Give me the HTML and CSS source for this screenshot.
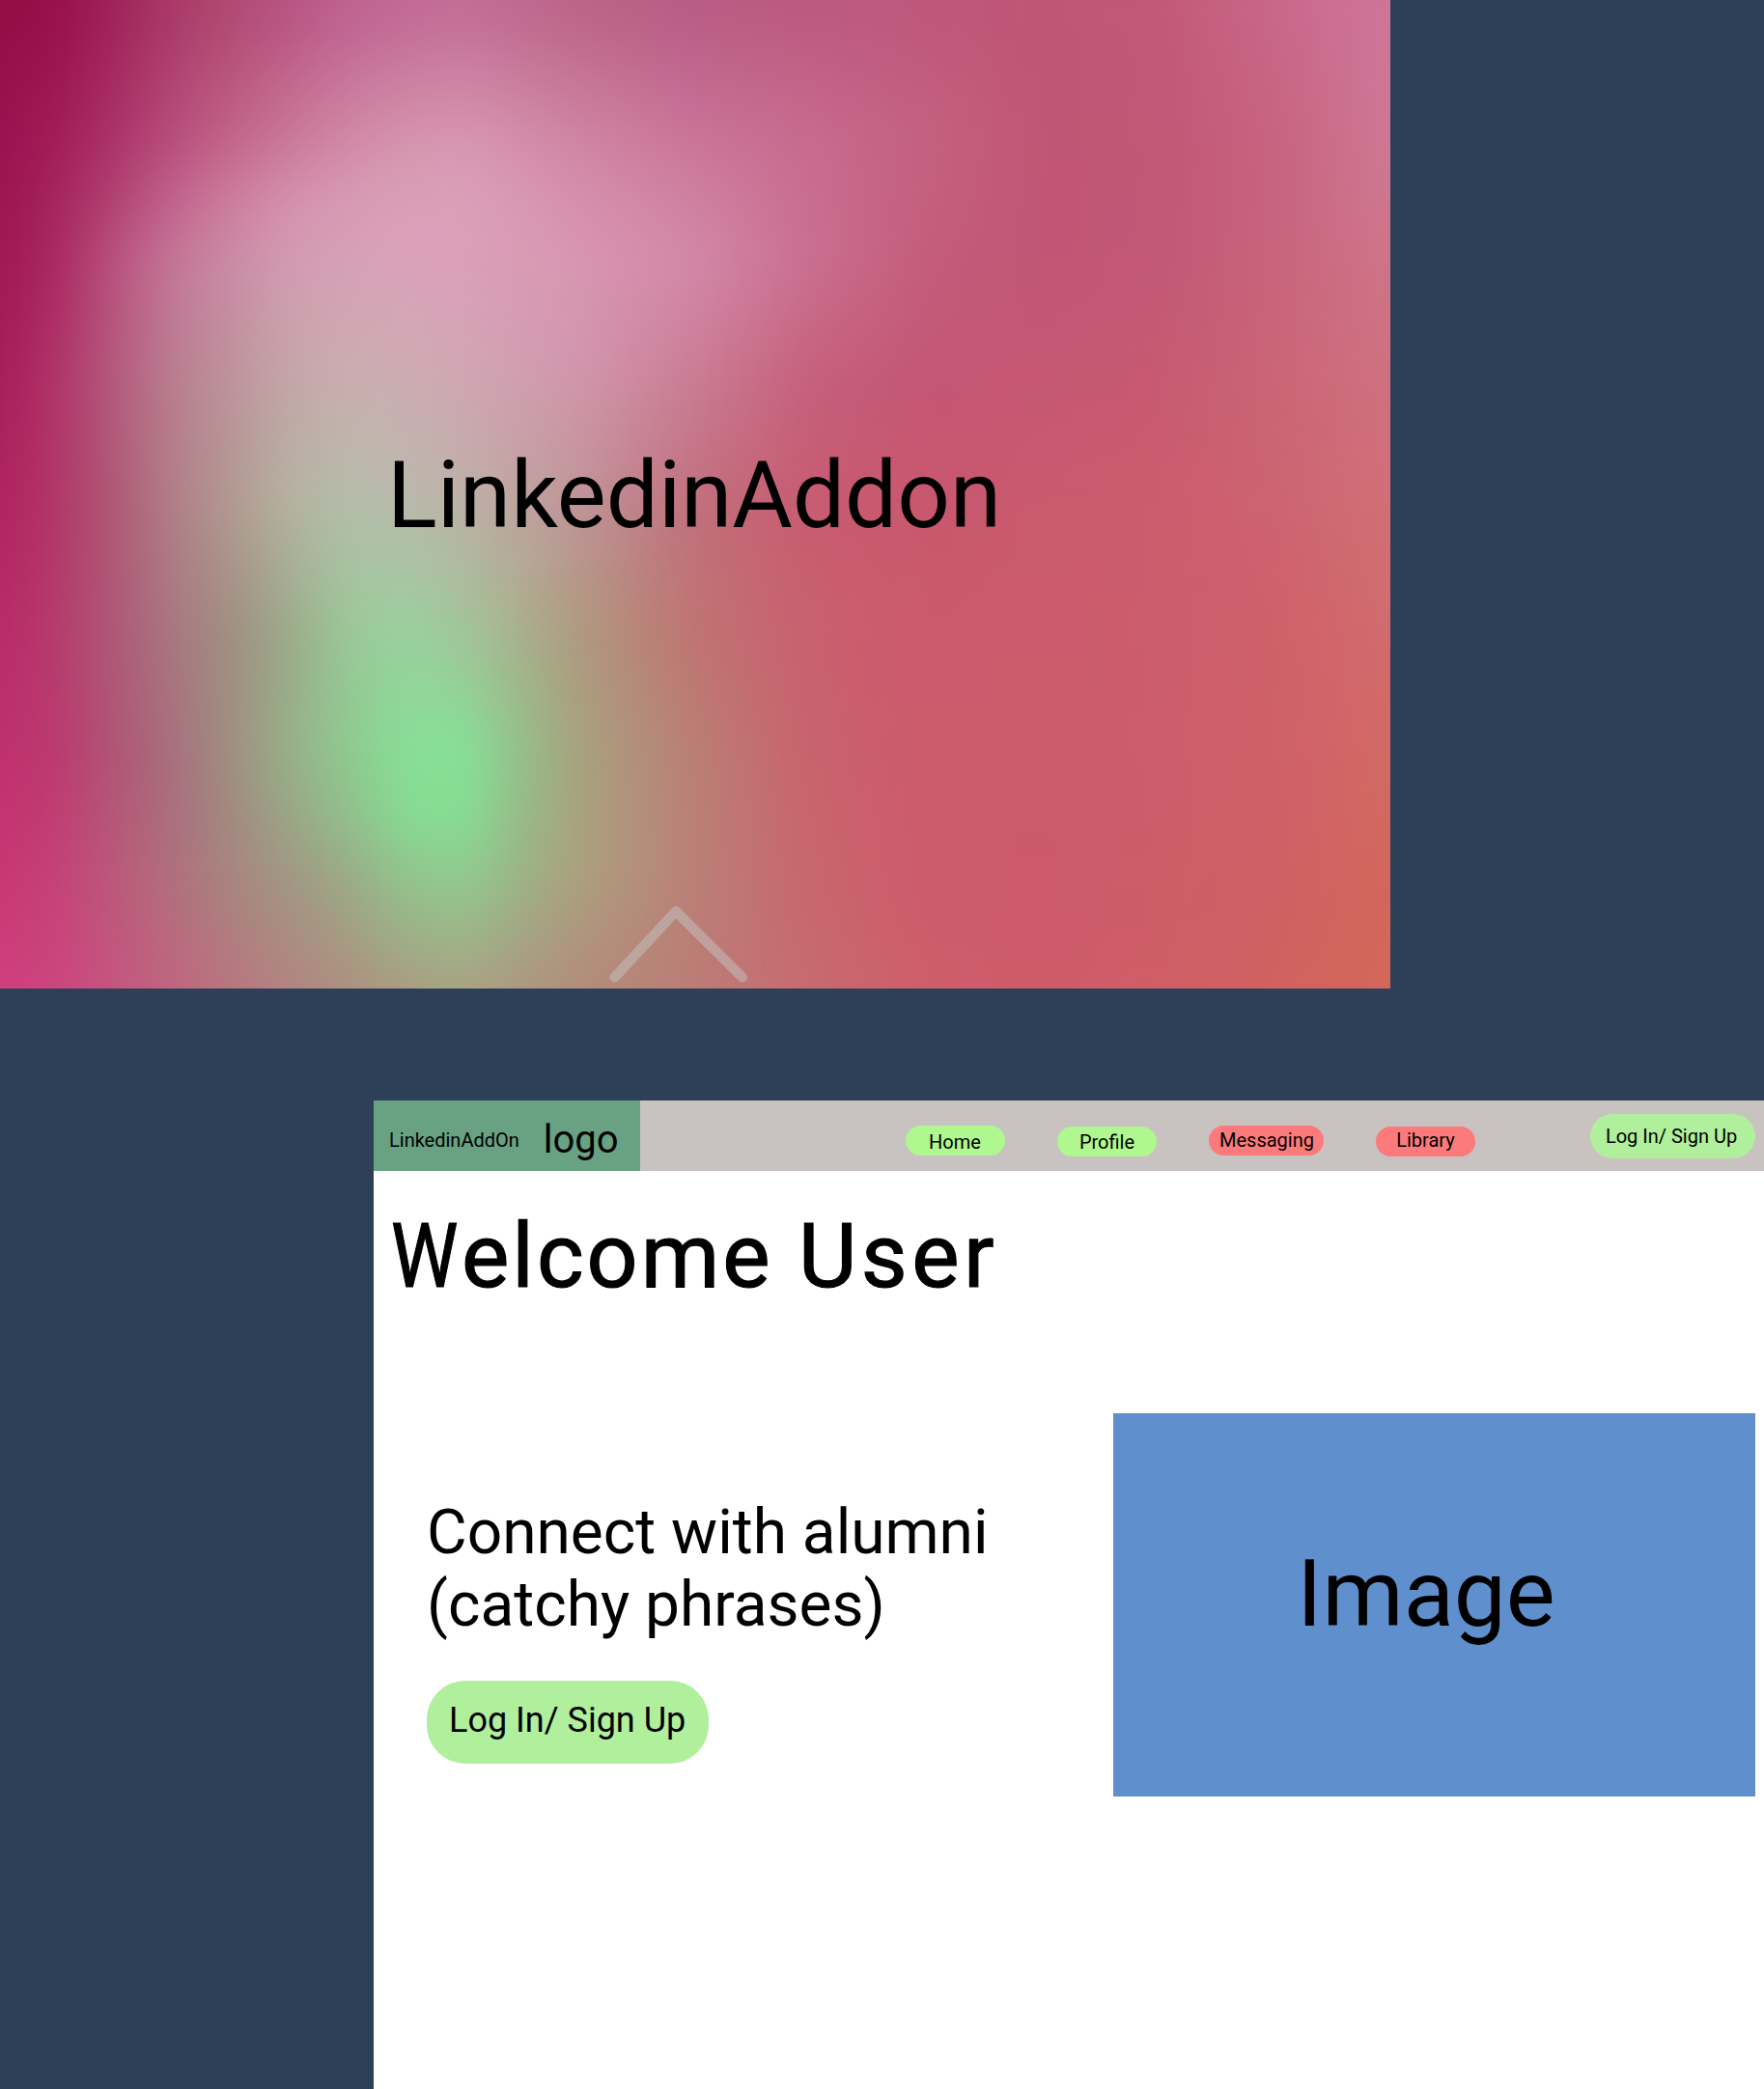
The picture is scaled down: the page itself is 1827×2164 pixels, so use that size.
FILE: index.html
```html
<!DOCTYPE html>
<html lang="en">
<head>
<meta charset="utf-8">
<title>LinkedinAddon</title>
<link rel="stylesheet" href="styles.css">
</head>
<body>
<section class="hero">
  <div class="mesh" aria-hidden="true">
    <div class="mesh-row row-0"></div>
    <div class="mesh-row row-128"></div>
    <div class="mesh-row row-192"></div>
    <div class="mesh-row row-256"></div>
    <div class="mesh-row row-384"></div>
    <div class="mesh-row row-512"></div>
    <div class="mesh-row row-640"></div>
    <div class="mesh-row row-768"></div>
    <div class="mesh-row row-832"></div>
    <div class="mesh-row row-896"></div>
    <div class="mesh-row row-1024"></div>
  </div>
  <h1 class="hero-title">LinkedinAddon</h1>
  <svg class="chevron" viewBox="0 0 144 80" width="144" height="80"><path d="M6.7 74.3 70 6 138.7 74.3"/></svg>
</section>
<main class="home">
  <header class="topbar">
    <div class="brand"><span class="brand-name">LinkedinAddOn</span><span class="brand-logo">logo</span></div>
    <nav class="nav">
      <a class="pill pill-home">Home</a>
      <a class="pill pill-profile">Profile</a>
      <a class="pill pill-messaging">Messaging</a>
      <a class="pill pill-library">Library</a>
    </nav>
    <a class="login">Log In/ Sign Up</a>
  </header>
  <h2 class="welcome"><span class="welcome-initial">W</span><span class="welcome-first">elcome</span><span class="welcome-second">User</span></h2>
  <div class="intro">
    <div class="pitch">
      <p class="tagline">Connect with alumni<br>(catchy phrases)</p>
      <a class="cta">Log In/ Sign Up</a>
    </div>
    <div class="picture"><span>Image</span></div>
  </div>
</main>
</body>
</html>
```

FILE: styles.css
```css
* { box-sizing: border-box; }
body {
  margin: 0;
  width: 1827px;
  height: 2164px;
  overflow: hidden;
  background: #2e4057;
  color: #000;
  font-family: Roboto, sans-serif;
}
h1, h2, p { margin: 0; font-weight: 400; }

/* Opening panel with a blended colour field */
.hero {
  position: relative;
  width: 1440px;
  height: 1024px;
  overflow: hidden;
  display: flex;
  justify-content: center;
  padding: 457px 2px 0 0;
}
.hero-title {
  position: relative;
  font-size: 96px;
  line-height: 112px;
  height: 112px;
}
/* Each row fades in over the one above; stops run left to right */
.mesh {
  position: absolute;
  inset: -46px -60px -60px;
  display: grid;
  filter: blur(20px);
}
.mesh-row {
  --span: 128px;
  grid-area: 1 / 1;
  background: linear-gradient(to right, var(--stops));
  -webkit-mask-image: linear-gradient(transparent var(--from), #000 calc(var(--from) + var(--span)));
  mask-image: linear-gradient(transparent var(--from), #000 calc(var(--from) + var(--span)));
}
.row-0 { --from: -200px; --stops: #950c44 60px, #98104a, #a0245a, #aa3a68, #b04a74, #b85582, #bf6290, #c26a94, #c36e96 540px, #bb6488 660px, #b95c85, #bc5a80, #be587b, #c05577, #c35879, #c9688a, #cf7699 1500px; }
.row-128 { --from: 60px; --stops: #9b1150 60px, #a31d58, #ab3468, #b74e7c, #c26489, #ca7798, #d088a6, #d493ad, #d797b2 540px, #cf84a5 660px, #ca7399, #c76b8d, #c46181, #c15574, #c25776, #c76380, #cf7896 1500px; }
.row-192 { --from: 188px; --span: 64px; --stops: #9d1350 60px, #a5265c, #b14373, #c2648d, #cd7e9f, #d591af, #d79bb4, #daa0b8, #dba0b9 540px, #d590ad 660px, #cf80a1, #c96d8f, #c45f7f, #c25575, #c25776, #c7647e, #cf7790 1500px; }
.row-256 { --from: 252px; --span: 64px; --stops: #a21652 60px, #aa2a62, #ba5480, #c5789a, #ca8ca6, #d39cb2, #d6a0b6, #dba2ba, #dba0b8 540px, #d896b2 660px, #d388a8, #ca6f90, #c45c7c, #c25575, #c35876, #c8647c, #cf7589 1500px; }
.row-384 { --from: 316px; --stops: #a91c58 60px, #b0366a, #b45c7e, #b97f8f, #bd949c, #c3a8a8, #c9afaf, #ccadb2, #d0a6b3 540px, #d096ab 660px, #ca7b93, #c55f7b, #c45674, #c55873, #c75a71, #cb6576, #cf7180 1500px; }
.row-512 { --from: 444px; --stops: #b1235f 60px, #b13868, #af5a76, #b08089, #b19a90, #b3b3a0, #b2bfa9, #b8baab, #bcb2a6 540px, #bf9496 660px, #c06f7b, #c85b70, #c9586e, #ca5a6e, #cb5d6e, #cd6370, #d17076 1500px; }
.row-640 { --from: 572px; --stops: #ba2a69 60px, #b53c6c, #ae5a77, #a87883, #a08f82, #9cab8a, #9bc898, #99d19f, #a1c599 540px, #a9b08c 600px, #af997f 660px, #c07372, #c9606f, #cb5a6d, #cb5b6c, #cc5d6c, #ce606a, #d26c6d 1500px; }
.row-768 { --from: 700px; --stops: #c0306e 60px, #bb3a6e, #b05676, #a7707e, #a0907f, #96b18a, #8eca8e, #87df96, #84e397 540px, #94bf8a 600px, #a8a27e 660px, #ba7e76, #c9626c, #cc5b6b, #cc5b6b, #cd5d6b, #cf6069, #d26a64 1500px; }
.row-832 { --from: 828px; --span: 64px; --stops: #c43270 60px, #c03e72, #b55878, #aa707e, #a28a80, #9ba686, #92bf8b, #87db93, #85df94 540px, #98ba87 600px, #a9a27e 660px, #bb7f77, #c9646d, #cd5b6a, #cc5a6a, #cd5d6a, #cf6067, #d36960 1500px; }
.row-896 { --from: 892px; --span: 64px; --stops: #c83873 60px, #c54278, #bb5a7a, #b0707e, #a8867f, #a19784, #9caa86, #92c48b, #92cb90 540px, #9cb386 600px, #aca07e 660px, #bb7f78, #c8666e, #cd5b6a, #cd596a, #ce5d69, #cf6064, #d3675c 1500px; }
.row-1024 { --from: 956px; --stops: #d0407d 60px, #cd467e, #c65580, #c1657f, #ba747f, #b4827f, #b08c80, #aa9a80, #aa9f82 540px, #ae9580 600px, #b38a7a 660px, #bb7c76, #c76b6f, #ce5e6a, #cf5b69, #d05e66, #d1625f, #d46859 1500px; }
.chevron {
  position: absolute;
  left: 630px;
  top: 938px;
  fill: none;
  stroke: #c4c4c4;
  stroke-opacity: .5;
  stroke-width: 10.5;
  stroke-linecap: round;
  stroke-linejoin: round;
}

/* Home page */
.home {
  width: 1440px;
  height: 1024px;
  margin: 116px 0 0 387px;
  background: #fff;
}
.topbar {
  display: flex;
  align-items: flex-start;
  height: 73px;
  background: #c8c2c1;
  font-size: 20px;
  line-height: 23px;
  white-space: nowrap;
}
.brand {
  display: flex;
  gap: 25px;
  width: 276px;
  height: 73px;
  padding: 30px 0 0 16px;
  background: #68a283;
}
.brand-logo {
  font-size: 40px;
  line-height: 47px;
  margin-top: -13px;
}
.nav {
  display: flex;
  align-items: flex-start;
  gap: 54px;
  padding: 26px 0 0 275px;
}
.pill {
  width: 103px;
  height: 31px;
  border-radius: 15.5px;
  text-align: center;
}
.pill-home { background: #b0f78f; padding: 6px 1px 0 0; }
.pill-profile { background: #b0f78f; padding-top: 5px; margin-top: 1px; }
.pill-messaging { width: 119px; background: #fc7a7b; padding: 4px 0 0 1px; }
.pill-library { background: #fc7a7b; padding-top: 3px; margin-top: 1px; }
.login {
  width: 171px;
  height: 46px;
  margin: 14px 0 0 119px;
  padding: 12px 3px 0 0;
  border-radius: 23px;
  background: #b0ef9b;
  text-align: center;
}
.welcome {
  display: flex;
  height: 251px;
  padding: 32px 0 0 18px;
  font-size: 93px;
  line-height: 114px;
  -webkit-text-stroke: 1.2px #000;
}
.welcome-initial {
  width: 73px;
  transform: scaleX(.84);
  transform-origin: left;
}
.welcome-first { width: 345px; letter-spacing: 3px; }
.welcome-second { margin-left: 4px; letter-spacing: 4.5px; }
.intro {
  display: flex;
  justify-content: space-between;
  padding: 0 9px 0 55px;
}
.pitch { padding-top: 86px; }
.tagline {
  font-size: 64px;
  line-height: 75px;
}
.cta {
  display: block;
  width: 292px;
  height: 86px;
  margin-top: 41px;
  padding: 20px 0 0 23px;
  border-radius: 40px;
  background: #b0ef9b;
  font-size: 36px;
  line-height: 42px;
}
.picture {
  width: 665px;
  height: 397px;
  padding: 131px 17px 0 0;
  background: #5f8fcd;
  font-size: 96px;
  line-height: 112px;
  text-align: center;
}
```
